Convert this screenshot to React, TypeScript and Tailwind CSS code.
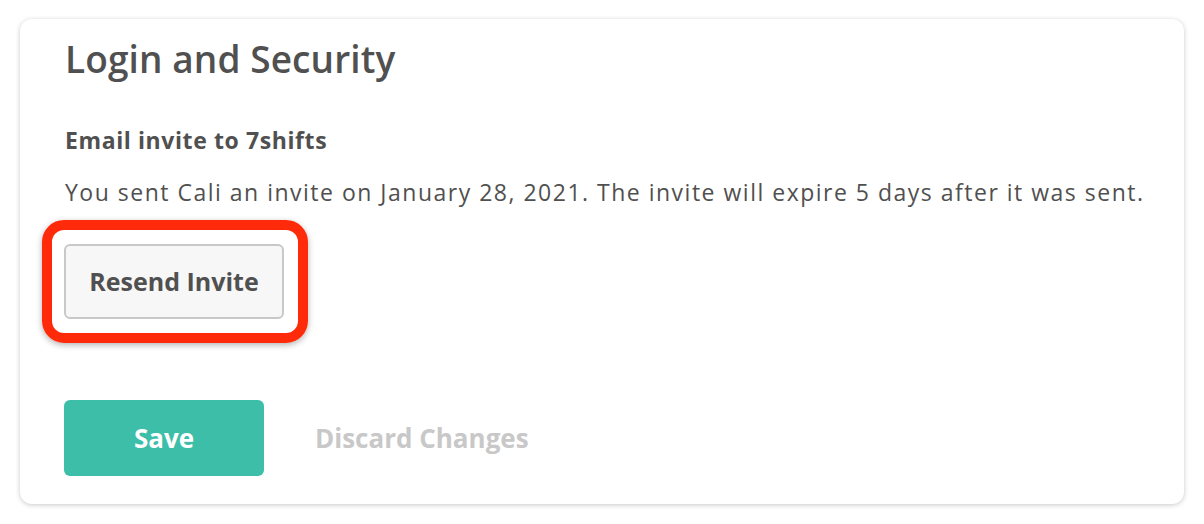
import React from "react";

export default function App() {
  return (
    <div
      className="w-[1204px] h-[524px] bg-white pt-[19px] pl-[20px]"
      style={{ fontFamily: "'Open Sans', Lato, sans-serif" }}
    >
      <div className="w-[1164px] h-[485px] rounded-[12px] bg-white shadow-[0_1px_5px_rgba(0,0,0,0.22)] pl-[45px] pt-[18px] text-[#505050]">
        <h1 className="text-[37px] leading-[44px] font-semibold tracking-[0.1px]">Login and Security</h1>
        <h2 className="mt-[45px] text-[23px] leading-[28px] font-bold tracking-[0.6px]">Email invite to 7shifts</h2>
        <p className="mt-[24px] text-[23px] leading-[28px] tracking-[1.5px]">
          You sent Cali an invite on January 28, 2021. The invite will expire 5 days after it was sent.
        </p>
        <div className="mt-[14px] ml-[-23px] w-[266px] h-[123px] rounded-[22px] border-[10px] border-[#ff2a0a] shadow-[0_2px_6px_rgba(0,0,0,0.3)] p-[12px] pt-[14px]">
          <button className="w-[220px] h-[75px] rounded-[6px] border-[2px] border-[#c8c8c8] bg-[#f7f7f7] text-[25px] font-bold text-[#505050]">
            Resend Invite
          </button>
        </div>
        <div className="mt-[57px] flex items-center">
          <button className="ml-[-1px] w-[200px] h-[76px] rounded-[6px] bg-[#3cbea8] text-white text-[26px] font-bold">
            Save
          </button>
          <span className="ml-[51px] text-[26px] font-bold text-[#c8c8c8]">Discard Changes</span>
        </div>
      </div>
    </div>
  );
}
